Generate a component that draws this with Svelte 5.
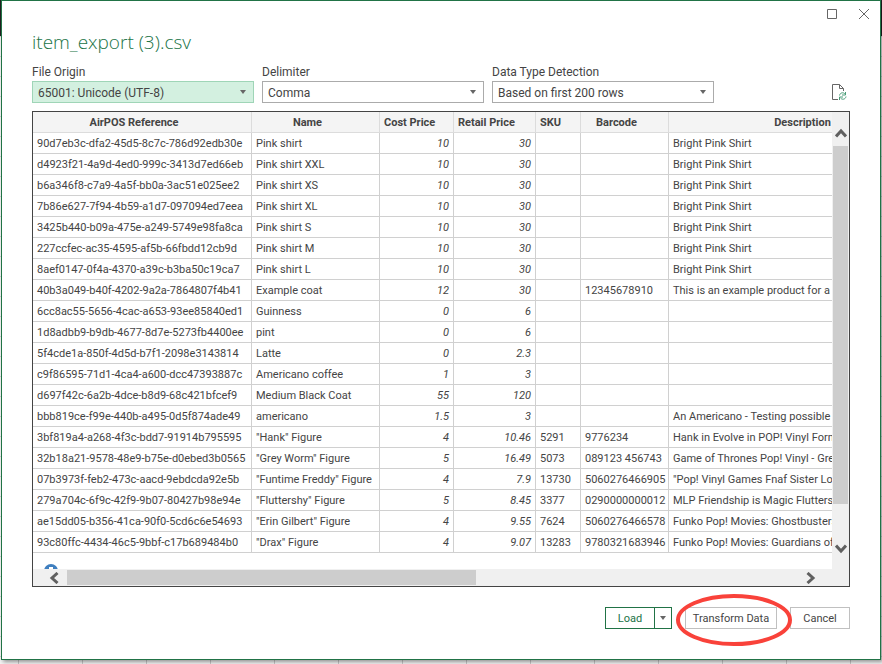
<script>
	const selects = [
		{ id: 'origin', label: 'File Origin', value: '65001: Unicode (UTF-8)', active: true },
		{ id: 'delimiter', label: 'Delimiter', value: 'Comma' },
		{ id: 'detection', label: 'Data Type Detection', value: 'Based on first 200 rows' }
	];

	const columns = ['AirPOS Reference', 'Name', 'Cost Price', 'Retail Price', 'SKU', 'Barcode', 'Description'];

	const rows = [
		['90d7eb3c-dfa2-45d5-8c7c-786d92edb30e', 'Pink shirt', '10', '30', '', '', 'Bright Pink Shirt'],
		['d4923f21-4a9d-4ed0-999c-3413d7ed66eb', 'Pink shirt XXL', '10', '30', '', '', 'Bright Pink Shirt'],
		['b6a346f8-c7a9-4a5f-bb0a-3ac51e025ee2', 'Pink shirt XS', '10', '30', '', '', 'Bright Pink Shirt'],
		['7b86e627-7f94-4b59-a1d7-097094ed7eea', 'Pink shirt XL', '10', '30', '', '', 'Bright Pink Shirt'],
		['3425b440-b09a-475e-a249-5749e98fa8ca', 'Pink shirt S', '10', '30', '', '', 'Bright Pink Shirt'],
		['227ccfec-ac35-4595-af5b-66fbdd12cb9d', 'Pink shirt M', '10', '30', '', '', 'Bright Pink Shirt'],
		['8aef0147-0f4a-4370-a39c-b3ba50c19ca7', 'Pink shirt L', '10', '30', '', '', 'Bright Pink Shirt'],
		['40b3a049-b40f-4202-9a2a-7864807f4b41', 'Example coat', '12', '30', '', '12345678910', 'This is an example product for a demo'],
		['6cc8ac55-5656-4cac-a653-93ee85840ed1', 'Guinness', '0', '6', '', '', ''],
		['1d8adbb9-b9db-4677-8d7e-5273fb4400ee', 'pint', '0', '6', '', '', ''],
		['5f4cde1a-850f-4d5d-b7f1-2098e3143814', 'Latte', '0', '2.3', '', '', ''],
		['c9f86595-71d1-4ca4-a600-dcc47393887c', 'Americano coffee', '1', '3', '', '', ''],
		['d697f42c-6a2b-4dce-b8d9-68c421bfcef9', 'Medium Black Coat', '55', '120', '', '', ''],
		['bbb819ce-f99e-440b-a495-0d5f874ade49', 'americano', '1.5', '3', '', '', 'An Americano - Testing possible issues'],
		['3bf819a4-a268-4f3c-bdd7-91914b795595', '"Hank" Figure', '4', '10.46', '5291', '9776234', 'Hank in Evolve in POP! Vinyl Form'],
		['32b18a21-9578-48e9-b75e-d0ebed3b0565', '"Grey Worm" Figure', '5', '16.49', '5073', '089123 456743', 'Game of Thrones Pop! Vinyl - Grey Worm'],
		['07b3973f-feb2-473c-aacd-9ebdcda92e5b', '"Funtime Freddy" Figure', '4', '7.9', '13730', '5060276466905', '"Pop! Vinyl Games Fnaf Sister Location'],
		['279a704c-6f9c-42f9-9b07-80427b98e94e', '"Fluttershy" Figure', '5', '8.45', '3377', '0290000000012', 'MLP Friendship is Magic Fluttershy'],
		['ae15dd05-b356-41ca-90f0-5cd6c6e54693', '"Erin Gilbert" Figure', '4', '9.55', '7624', '5060276466578', 'Funko Pop! Movies: Ghostbusters'],
		['93c80ffc-4434-46c5-9bbf-c17b689484b0', '"Drax" Figure', '4', '9.07', '13283', '9780321683946', 'Funko Pop! Movies: Guardians of the']
	];
</script>

<div class="sheet">
	<main class="dialog">
		<div class="titlebar">
			<button type="button" aria-label="Maximize">
				<svg width="12" height="12" viewBox="0 0 12 12"><path d="M1.500 1.500h9v9h-9z" /></svg>
			</button>
			<button type="button" aria-label="Close">
				<svg width="12" height="12" viewBox="0 0 12 12"><path d="M1 1l10 10M11 1L1 11" /></svg>
			</button>
		</div>

		<h1>item_export (3).csv</h1>

		<div class="options">
			{#each selects as s}
				<div class="field">
					<label for={s.id}>{s.label}</label>
					<div class="select" class:active={s.active}>
						<select id={s.id}>
							<option>{s.value}</option>
						</select>
						<svg width="6" height="4" viewBox="0 0 6 4"><path d="M0 0h6L3 4z" /></svg>
					</div>
				</div>
			{/each}
			<button type="button" class="refresh" aria-label="Refresh">
				<svg width="16" height="19" viewBox="1 1 16 19">
					<path class="page" d="M7 16.500H1.500V1.500h7l4 4V8M8.500 1.500v4h4" />
					<path class="arrows" d="M8.500 12.500c.5-3 4-3.500 5.500-1.500M14.500 9v3h-3.500M15 13.500c-.5 3-4 3.500-5.500 1.500M8.500 17v-3h3.500" />
				</svg>
			</button>
		</div>

		<div class="preview">
			<div class="view">
				<table>
					<colgroup>
						{#each columns as _, i}
							<col class="c{i}" />
						{/each}
					</colgroup>
					<thead>
						<tr>
							{#each columns as column}
								<th>{column}</th>
							{/each}
						</tr>
					</thead>
					<tbody>
						{#each rows as row}
							<tr>
								{#each row as cell, i}
									<td class:num={i === 2 || i === 3}>{cell}</td>
								{/each}
							</tr>
						{/each}
					</tbody>
				</table>
				<div class="info">
					<svg width="14" height="14" viewBox="0 0 14 14">
						<circle cx="7" cy="7" r="7" fill="#3f7fbf" />
						<path d="M5 3h4v2H5zM6 6h2v5H6z" fill="#fff" />
					</svg>
				</div>
			</div>
			<div class="vbar">
				<button type="button" aria-label="Scroll up">
					<svg width="12" height="10" viewBox="0 0 12 10"><path d="M1 8.500L6 3l5 5.500" /></svg>
				</button>
				<div class="thumb"></div>
				<button type="button" aria-label="Scroll down">
					<svg width="12" height="10" viewBox="0 0 12 10"><path d="M1 1.500L6 7l5-5.500" /></svg>
				</button>
			</div>
			<div class="hbar">
				<button type="button" aria-label="Scroll left">
					<svg width="10" height="12" viewBox="0 0 10 12"><path d="M8.500 1L3 6l5.500 5" /></svg>
				</button>
				<div class="track"><div class="thumb"></div></div>
				<button type="button" aria-label="Scroll right">
					<svg width="10" height="12" viewBox="0 0 10 12"><path d="M1.500 1L7 6l-5.500 5" /></svg>
				</button>
			</div>
		</div>

		<footer>
			<div class="load">
				<button type="button">Load</button>
				<button type="button" class="more" aria-label="Load options">
					<svg width="6" height="4" viewBox="0 0 6 4"><path d="M0 0h6L3 4z" /></svg>
				</button>
			</div>
			<div class="marked">
				<button type="button" class="transform">Transform Data</button>
				<svg class="ring" width="118" height="54" viewBox="0 0 118 54">
					<ellipse cx="59" cy="27" rx="56" ry="24" />
				</svg>
			</div>
			<button type="button" class="cancel">Cancel</button>
		</footer>
	</main>
</div>

<style>
	:global(body) {
		background: #fff;
	}
	.sheet {
		box-sizing: border-box;
		min-height: 100vh;
		padding: 0 1px;
		overflow: hidden;
		font-family: Roboto, 'Noto Sans', sans-serif;
		font-size: 12px;
		line-height: 16px;
		color: #444;
		background:
			linear-gradient(#222, #222) 0 0 / 100% 36px no-repeat,
			repeating-linear-gradient(90deg, transparent 0 18px, #c8c8c8 18px 19px, transparent 19px 64px) 0 0,
			repeating-linear-gradient(transparent 0 16px, #d4d4d4 16px 17px, transparent 17px 20px) 0 0,
			#f4f4f4;
	}
	.dialog {
		padding: 0 30px 30px;
		background: #fff;
		border: 1px solid #217346;
		box-shadow: 2px 2px 4px rgba(0, 0, 0, 0.4);
	}
	button {
		padding: 0;
		font: inherit;
		color: inherit;
		background: #fff;
		border: 1px solid #c0c0c0;
	}
	.titlebar {
		display: flex;
		justify-content: flex-end;
		gap: 20px;
		height: 26px;
		padding-top: 7px;
		margin-right: -20px;
		box-sizing: border-box;
	}
	.titlebar button {
		height: 12px;
		border: 0;
	}
	svg {
		display: block;
	}
	.titlebar path {
		fill: none;
		stroke: #666;
	}
	h1 {
		margin: 0;
		font-family: 'Open Sans', 'Noto Sans', sans-serif;
		font-size: 19px;
		font-weight: 300;
		line-height: 30px;
		color: #217346;
	}
	.options {
		display: flex;
		gap: 8px;
		margin-top: 7px;
	}
	.field {
		flex: 0 1 222px;
	}
	label {
		display: block;
		height: 17px;
	}
	.select {
		position: relative;
	}
	select {
		display: block;
		box-sizing: border-box;
		width: 100%;
		height: 22px;
		padding: 2px 5px 0;
		appearance: none;
		font: inherit;
		color: inherit;
		background: #fff;
		border: 1px solid #ababab;
		border-radius: 0;
	}
	.active select {
		background: #d3f0e0;
		border-color: #9fd5b7;
	}
	.select svg {
		position: absolute;
		top: 9px;
		right: 8px;
	}
	.select path,
	.more path {
		fill: #666;
	}
	.refresh {
		align-self: flex-end;
		margin-left: auto;
		margin-right: 2px;
		border: 0;
	}
	.refresh path {
		fill: none;
		stroke: #666;
	}
	.refresh .arrows {
		stroke: #4a9d78;
	}
	.preview {
		display: grid;
		grid-template-columns: minmax(0, 1fr) 17px;
		margin-top: 8px;
		background: #f0f0f0;
		border: 1px solid #444;
	}
	.view {
		overflow: hidden;
		background: #fff;
	}
	table {
		width: 920px;
		table-layout: fixed;
		border-collapse: separate;
		border-spacing: 0;
		font-size: 11px;
	}
	.c0 {
		width: 219px;
	}
	.c1 {
		width: 128px;
	}
	.c2 {
		width: 74px;
	}
	.c3 {
		width: 82px;
	}
	.c4 {
		width: 45px;
	}
	.c5 {
		width: 88px;
	}
	th,
	td {
		box-sizing: border-box;
		height: 21px;
		padding: 2px 4px 0;
		overflow: hidden;
		line-height: 18px;
		white-space: nowrap;
		border-right: 1px solid #d0d0d0;
		border-bottom: 1px solid #d0d0d0;
	}
	th {
		padding-right: 20px;
		font-weight: 700;
		background: #f4f4f4;
		border-color: #dcdcdc;
	}
	th:nth-child(n + 3):nth-child(-n + 5) {
		padding-right: 0;
		text-align: left;
	}
	.num {
		font-style: italic;
		text-align: right;
	}
	.info {
		height: 5px;
		padding: 11px 0 0 11px;
		overflow: hidden;
	}
	.vbar {
		display: flex;
		flex-direction: column;
		align-items: center;
		padding: 16px 0 15px;
	}
	.vbar button,
	.hbar button {
		background: none;
		border: 0;
	}
	.vbar path,
	.hbar path {
		fill: none;
		stroke: #606060;
		stroke-width: 3;
	}
	.vbar .thumb {
		flex: 0 1 358px;
		width: 15px;
		margin: 8px 0 auto;
	}
	.thumb {
		background: #cdcdcd;
	}
	.hbar {
		grid-column: 1 / -1;
		display: flex;
		align-items: center;
		height: 17px;
		padding: 0 33px 0 16px;
	}
	.track {
		flex: 1;
		padding: 0 8px;
	}
	.hbar .thumb {
		width: 56%;
		height: 15px;
	}
	footer {
		display: flex;
		justify-content: flex-end;
		gap: 13px;
		margin-top: 20px;
		font-size: 11px;
	}
	footer button {
		box-sizing: border-box;
		height: 22px;
		padding-top: 2px;
	}
	.load {
		display: flex;
	}
	.load button {
		width: 50px;
		color: #217346;
		border-color: #217346;
	}
	.load .more {
		display: grid;
		place-items: center;
		width: 18px;
		padding: 0;
		margin-left: -1px;
	}
	.marked {
		position: relative;
	}
	.transform {
		width: 92px;
	}
	.cancel {
		width: 60px;
	}
	.ring {
		position: absolute;
		top: -14px;
		left: -10px;
		z-index: 1;
		pointer-events: none;
	}
	.ring ellipse {
		fill: none;
		stroke: #f9423a;
		stroke-width: 4;
	}
</style>
